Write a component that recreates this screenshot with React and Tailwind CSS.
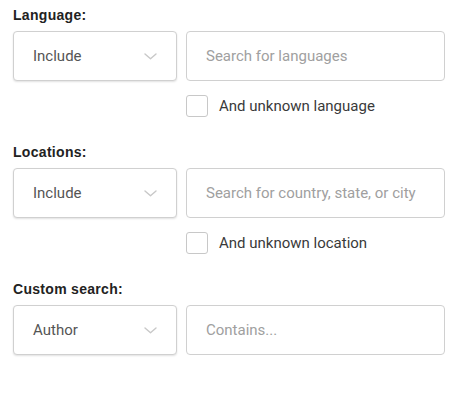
import { useState } from "react";

const sections = [
  {
    label: "Language:",
    option: "Include",
    placeholder: "Search for languages",
    check: "And unknown language",
  },
  {
    label: "Locations:",
    option: "Include",
    placeholder: "Search for country, state, or city",
    check: "And unknown location",
  },
  {
    label: "Custom search:",
    option: "Author",
    placeholder: "Contains...",
  },
];

function Chevron() {
  return (
    <svg width="13" height="7" viewBox="0 0 13 7" fill="none">
      <polyline
        points="1,1 6.5,5.8 12,1"
        stroke="#c8c8c8"
        strokeWidth="1.4"
        strokeLinecap="round"
        strokeLinejoin="round"
      />
    </svg>
  );
}

function Section({ s }) {
  const [checked, setChecked] = useState(false);

  return (
    <div className={s.check ? "pt-[5px] pb-[20px]" : "pt-[5px]"}>
      <div className="h-5 text-[14px] leading-5 font-bold text-[#222] tracking-[0.3px] font-['Liberation_Sans',Arial,sans-serif]">
        {s.label}
      </div>
      <div className="mt-[6px] flex gap-[9px] font-['Roboto',sans-serif]">
        <button className="flex h-[50px] w-[164px] items-center justify-between rounded-[4px] border border-[#d0d0d0] bg-white pl-[19px] pr-[19px] text-[15px] text-[#555] shadow-[0_1px_2px_rgba(0,0,0,0.12)]">
          <span>{s.option}</span>
          <Chevron />
        </button>
        <input
          className="h-[50px] w-[259px] rounded-[4px] border border-[#d0d0d0] bg-white px-[19px] text-[15px] text-[#555] outline-none placeholder:text-[#a0a0a0]"
          placeholder={s.placeholder}
        />
      </div>
      {s.check && (
        <label className="mt-[14px] ml-[173px] flex h-[22px] items-center gap-[11px] font-['Roboto',sans-serif] text-[15px] text-[#3a3a3a]">
          <span
            className="h-[22px] w-[22px] rounded-[3px] border border-[#c8c8c8] bg-white"
            onClick={() => setChecked(!checked)}
          />
          {s.check}
        </label>
      )}
    </div>
  );
}

export default function App() {
  return (
    <main className="min-h-[398px] w-[463px] bg-white pl-[13px]">
      {sections.map((s) => (
        <Section key={s.label} s={s} />
      ))}
    </main>
  );
}
